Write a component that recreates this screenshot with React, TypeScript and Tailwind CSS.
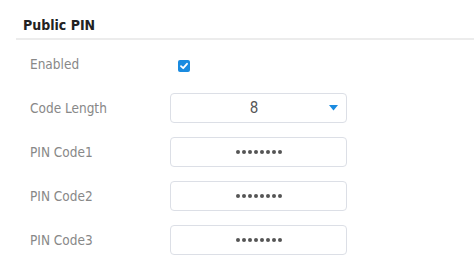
import React from "react";

const font = { fontFamily: '"DejaVu Sans Condensed", "DejaVu Sans", Verdana, sans-serif' };

function Dots() {
  return (
    <div className="flex gap-[2px]">
      {Array.from({ length: 8 }).map((_, i) => (
        <span key={i} className="w-1 h-1 rounded-full bg-[#555]" />
      ))}
    </div>
  );
}

function Row({ label, children }: { label: string; children: React.ReactNode }) {
  return (
    <div className="flex items-center h-[30px]">
      <div className="w-[140px] text-[13.5px] text-[#888] pt-[1px]">{label}</div>
      {children}
    </div>
  );
}

function PinBox() {
  return (
    <div className="w-[177px] h-[30px] border border-[#dcdfe6] rounded-[4px] flex items-center justify-center">
      <Dots />
    </div>
  );
}

export default function App() {
  return (
    <div className="w-[474px] h-[264px] bg-white pl-4 overflow-hidden" style={font}>
      <div className="h-[40px] flex items-center pl-[7px] pt-[12px] border-b-2 border-[#ececec]">
        <span className="text-[14px] font-bold text-[#222]">Public PIN</span>
      </div>
      <div className="pl-[14px] mt-[9px] flex flex-col gap-[14px]">
        <Row label="Enabled">
          <div className="pl-2 pt-[3px]">
            <div className="w-[12px] h-[12px] rounded-[2px] bg-[#1a8be0] flex items-center justify-center">
              <svg width="10" height="10" viewBox="0 0 10 10">
                <path d="M2 5.2 L4.2 7.2 L8 2.8" fill="none" stroke="white" strokeWidth="1.8" strokeLinecap="round" strokeLinejoin="round" />
              </svg>
            </div>
          </div>
        </Row>
        <Row label="Code Length">
          <div className="w-[177px] h-[30px] border border-[#dcdfe6] rounded-[4px] flex items-center pr-2">
            <span className="flex-1 text-center text-[15px] text-[#555] pl-[8px]">8</span>
            <svg width="9" height="6" viewBox="0 0 9 6">
              <path d="M0 0 L9 0 L4.5 5.5 Z" fill="#1a8be0" />
            </svg>
          </div>
        </Row>
        <Row label="PIN Code1">
          <PinBox />
        </Row>
        <Row label="PIN Code2">
          <PinBox />
        </Row>
        <Row label="PIN Code3">
          <PinBox />
        </Row>
      </div>
    </div>
  );
}
